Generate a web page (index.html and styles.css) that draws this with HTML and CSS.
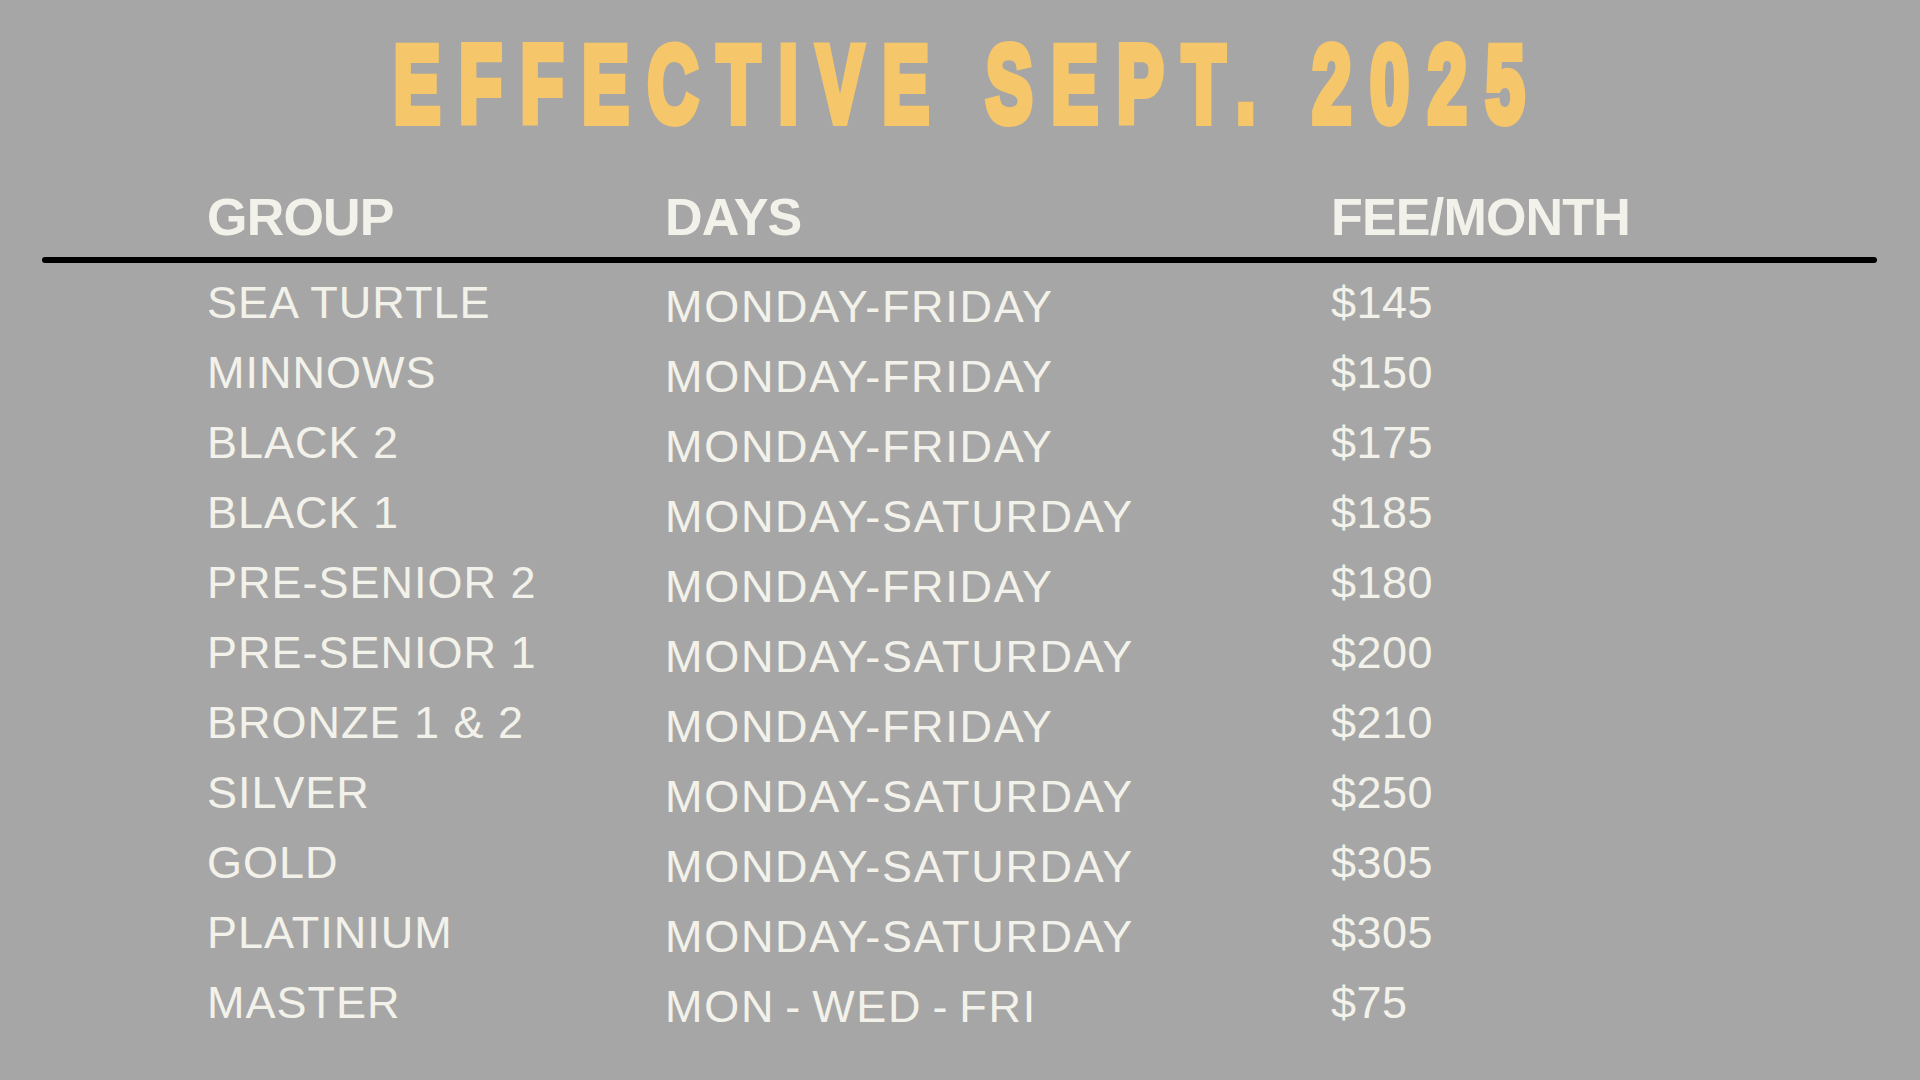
FILE: index.html
```html
<!DOCTYPE html>
<html lang="en">
<head>
<meta charset="utf-8">
<title>Fees Effective Sept. 2025</title>
<link rel="stylesheet" href="styles.css">
</head>
<body>
<main class="page">
  <header class="title-wrap">
    <h1 class="title"><span class="title-text">EFFECTIVE SEPT. 2025</span></h1>
  </header>
  <section class="table">
    <div class="row head">
      <div class="cell">GROUP</div>
      <div class="cell">DAYS</div>
      <div class="cell">FEE/MONTH</div>
    </div>
    <div class="rule"></div>
    <div class="body">
      <div class="row"><div class="cell group">SEA TURTLE</div><div class="cell days">MONDAY-FRIDAY</div><div class="cell fee">$145</div></div>
      <div class="row"><div class="cell group">MINNOWS</div><div class="cell days">MONDAY-FRIDAY</div><div class="cell fee">$150</div></div>
      <div class="row"><div class="cell group">BLACK 2</div><div class="cell days">MONDAY-FRIDAY</div><div class="cell fee">$175</div></div>
      <div class="row"><div class="cell group">BLACK 1</div><div class="cell days">MONDAY-SATURDAY</div><div class="cell fee">$185</div></div>
      <div class="row"><div class="cell group">PRE-SENIOR 2</div><div class="cell days">MONDAY-FRIDAY</div><div class="cell fee">$180</div></div>
      <div class="row"><div class="cell group">PRE-SENIOR 1</div><div class="cell days">MONDAY-SATURDAY</div><div class="cell fee">$200</div></div>
      <div class="row"><div class="cell group">BRONZE 1 &amp; 2</div><div class="cell days">MONDAY-FRIDAY</div><div class="cell fee">$210</div></div>
      <div class="row"><div class="cell group">SILVER</div><div class="cell days">MONDAY-SATURDAY</div><div class="cell fee">$250</div></div>
      <div class="row"><div class="cell group">GOLD</div><div class="cell days">MONDAY-SATURDAY</div><div class="cell fee">$305</div></div>
      <div class="row"><div class="cell group">PLATINIUM</div><div class="cell days">MONDAY-SATURDAY</div><div class="cell fee">$305</div></div>
      <div class="row"><div class="cell group">MASTER</div><div class="cell days">MON - WED - FRI</div><div class="cell fee">$75</div></div>
    </div>
  </section>
</main>
</body>
</html>
```

FILE: styles.css
```css
html, body {
  margin: 0;
  padding: 0;
}
body {
  background: #a6a6a6;
  width: 1920px;
  height: 1080px;
  overflow: hidden;
  font-family: "Liberation Sans", Arial, sans-serif;
  color: #f3f2ea;
}
.page {
  display: flex;
  flex-direction: column;
}
.title-wrap {
  display: flex;
  justify-content: center;
  padding-top: 29px;
  padding-right: 12px;
}
.title {
  margin: 0;
  font-size: 110px;
  line-height: 1;
  font-weight: 700;
  color: #f5c66a;
  white-space: nowrap;
}
.title-text {
  display: inline-block;
  letter-spacing: 29px;
  margin-right: -29px;
  -webkit-text-stroke: 8px #f5c66a;
  transform: scaleX(0.64);
  transform-origin: center;
}
.table {
  display: flex;
  flex-direction: column;
  margin-top: 52px;
}
.row {
  display: grid;
  grid-template-columns: 458px 666px 1fr;
  padding-left: 207px;
}
.head {
  font-size: 52px;
  font-weight: 700;
  letter-spacing: -0.8px;
  line-height: 52px;
}
.rule {
  margin: 14px 0 0 42px;
  width: 1835px;
  height: 6px;
  background: #000;
  border-radius: 3px;
}
.body {
  display: flex;
  flex-direction: column;
  padding-top: 5px;
}
.body .row {
  height: 70px;
  font-size: 45px;
  line-height: 70px;
}
.body .cell.group {
  letter-spacing: 1px;
}
.body .cell.days {
  padding-top: 4px;
  letter-spacing: 1.7px;
  word-spacing: -4px;
}
.body .cell.fee {
  letter-spacing: 0.5px;
}
```
